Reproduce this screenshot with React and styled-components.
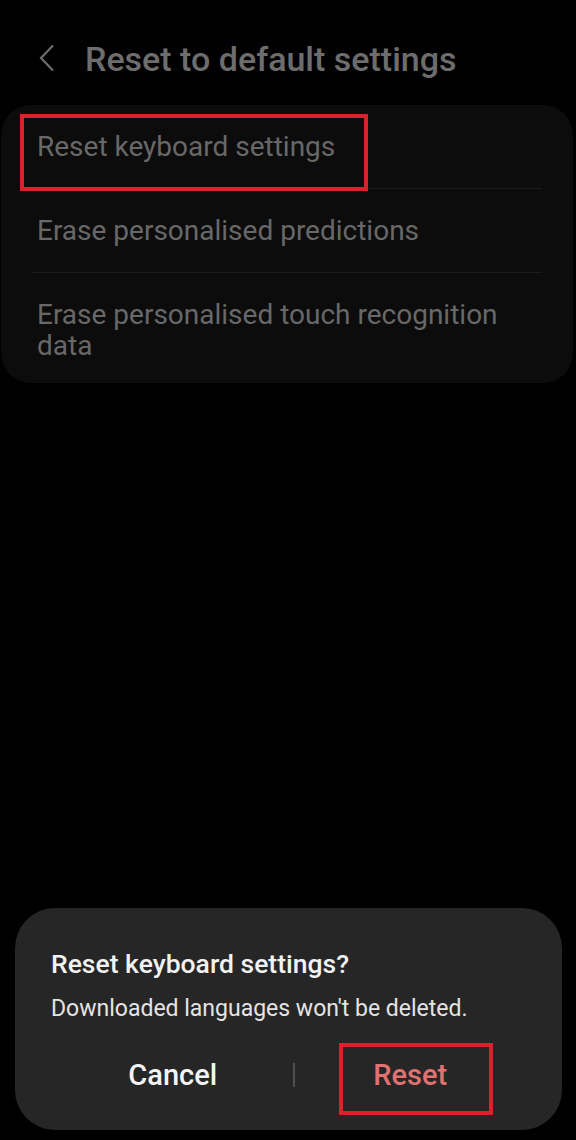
import React from 'react';
import styled, { createGlobalStyle } from 'styled-components';

const GlobalStyle = createGlobalStyle`
	body {
		margin: 0;
		background: #000;
		font-family: Roboto, "Noto Sans", "Liberation Sans", sans-serif;
	}
`;

const Screen = styled.div`
	width: 576px;
	height: 1140px;
	display: flex;
	flex-direction: column;
	background: #000;
	overflow: hidden;
`;

const Header = styled.header`
	height: 105px;
	box-sizing: border-box;
	padding: 39px 0 0 39px;
	display: flex;
	align-items: flex-start;
	gap: 30px;
`;

const Back = styled.svg`
	width: 16px;
	height: 28px;
	margin-top: 5px;
	flex: none;
`;

const Title = styled.h1`
	margin: 0;
	font-size: 34px;
	line-height: 40px;
	font-weight: 500;
	color: #6d6d6d;
`;

const Card = styled.section`
	margin: 0 3px 0 1px;
	background: #0c0c0c;
	border-radius: 30px;
	display: flex;
	flex-direction: column;
`;

const Row = styled.div`
	padding: 26px 31px ${p => (p.$last ? '22px' : '26px')} 36px;
	font-size: 28px;
	line-height: 31px;
	color: #686868;
`;

const Divider = styled.div`
	height: 1px;
	margin: 0 31px 0 32px;
	background: #1c1c1c;
`;

const Label = styled.span`
	position: relative;
	display: inline-block;
`;

const Highlight = styled.span`
	position: absolute;
	inset: ${p => p.$inset};
	border: 4px solid #d8232d;
	pointer-events: none;
`;

const Spacer = styled.div`
	flex: 1;
`;

const Dialog = styled.div`
	margin: 0 14px 10px 15px;
	height: 222px;
	box-sizing: border-box;
	padding-top: 41px;
	background: #262626;
	border-radius: 40px;
	display: flex;
	flex-direction: column;
`;

const DialogTitle = styled.div`
	padding-left: 36px;
	font-size: 26.5px;
	line-height: 30px;
	font-weight: 500;
	color: #f2f2f2;
`;

const DialogText = styled.div`
	margin-top: 16px;
	padding-left: 36px;
	font-size: 23px;
	line-height: 28px;
	color: #e4e4e4;
`;

const Actions = styled.div`
	margin-top: 17px;
	height: 70px;
	padding: 0 36px 0 42px;
	display: flex;
	align-items: center;
`;

const Action = styled.div`
	flex: 1;
	display: flex;
	justify-content: center;
	font-size: 29px;
	line-height: 34px;
	font-weight: 500;
	color: ${p => (p.$danger ? '#e27171' : '#f4f4f4')};
`;

const Separator = styled.div`
	width: 2px;
	height: 24px;
	margin-left: 4px;
	background: #4e4e4e;
`;

const App = () =>
	<Screen>
		<GlobalStyle />
		<Header>
			<Back viewBox="0 0 16 28">
				<polyline points="14,1.5 2,14 14,26.5" fill="none" stroke="#6d6d6d" strokeWidth="2.2" />
			</Back>
			<Title>Reset to default settings</Title>
		</Header>
		<Card>
			<Row>
				<Label>
					Reset keyboard settings
					<Highlight $inset="-17px -33px -29px -17px" />
				</Label>
			</Row>
			<Divider />
			<Row>Erase personalised predictions</Row>
			<Divider />
			<Row $last>Erase personalised touch recognition data</Row>
		</Card>
		<Spacer />
		<Dialog>
			<DialogTitle>Reset keyboard settings?</DialogTitle>
			<DialogText>Downloaded languages won't be deleted.</DialogText>
			<Actions>
				<Action>Cancel</Action>
				<Separator />
				<Action $danger>
					<Label>
						Reset
						<Highlight $inset="-15px -46px -23px -34px" />
					</Label>
				</Action>
			</Actions>
		</Dialog>
	</Screen>;

export default App;
